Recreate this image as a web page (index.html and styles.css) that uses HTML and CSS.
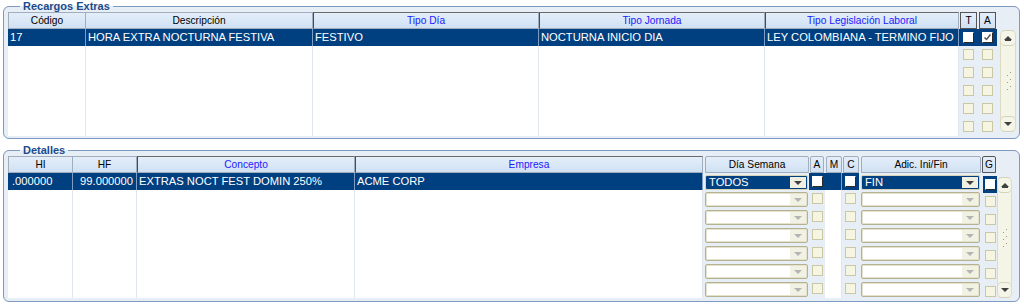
FILE: index.html
```html
<!DOCTYPE html>
<html lang="es">

<head>
  <meta charset="UTF-8">
  <meta name="viewport" content="width=device-width, initial-scale=1.0">
  <title>Recargos Extras</title>
  <link rel="stylesheet" href="styles.css">
</head>

<body>
  <fieldset class="panel panel-top">
    <legend>Recargos Extras</legend>
    <div class="grid grid-top">
      <div class="col w-cod">
        <div class="hd first">Código</div>
        <div class="sel">17</div>
        <div class="body"></div>
      </div>
      <div class="col w-desc">
        <div class="hd">Descripción</div>
        <div class="sel">HORA EXTRA NOCTURNA FESTIVA</div>
        <div class="body"></div>
      </div>
      <div class="col w-dia">
        <div class="hd lookup">Tipo Día</div>
        <div class="sel">FESTIVO</div>
        <div class="body"></div>
      </div>
      <div class="col w-jor">
        <div class="hd lookup">Tipo Jornada</div>
        <div class="sel">NOCTURNA INICIO DIA</div>
        <div class="body"></div>
      </div>
      <div class="col w-leg">
        <div class="hd lookup">Tipo Legislación Laboral</div>
        <div class="sel">LEY COLOMBIANA - TERMINO FIJO</div>
        <div class="body"></div>
      </div>
      <div class="col ck w-t">
        <div class="hd box">T</div>
        <div class="sel mid"><span class="cb on"></span></div>
        <div class="ckrow"><span class="cb"></span></div>
        <div class="ckrow"><span class="cb"></span></div>
        <div class="ckrow"><span class="cb"></span></div>
        <div class="ckrow"><span class="cb"></span></div>
        <div class="ckrow"><span class="cb"></span></div>
      </div>
      <div class="col ck w-a">
        <div class="hd box">A</div>
        <div class="sel mid">
          <span class="cb on">
            <svg width="9" height="9" viewBox="0 0 9 9"><polyline points="1.5,4.5 3.5,6.5 7.5,1.5" fill="none" stroke="#555555" stroke-width="1.5"/></svg>
          </span>
        </div>
        <div class="ckrow"><span class="cb"></span></div>
        <div class="ckrow"><span class="cb"></span></div>
        <div class="ckrow"><span class="cb"></span></div>
        <div class="ckrow"><span class="cb"></span></div>
        <div class="ckrow"><span class="cb"></span></div>
      </div>
      <div class="scroll scroll-top">
        <div class="sb-btn"><span class="tri-up"></span></div>
        <svg class="grip" width="7" height="18" viewBox="0 0 7 18">
          <rect x="5" y="0" width="1" height="1" fill="#9c9c84"/><rect x="2" y="3" width="1" height="1" fill="#9c9c84"/>
          <rect x="5" y="7" width="1" height="1" fill="#9c9c84"/><rect x="2" y="10" width="1" height="1" fill="#9c9c84"/>
          <rect x="5" y="14" width="1" height="1" fill="#9c9c84"/><rect x="2" y="17" width="1" height="1" fill="#9c9c84"/>
        </svg>
        <div class="sb-btn"><span class="tri-down"></span></div>
      </div>
    </div>
  </fieldset>

  <fieldset class="panel panel-bottom">
    <legend>Detalles</legend>
    <div class="grid grid-bottom">
      <div class="col w-hi">
        <div class="hd first">HI</div>
        <div class="sel pad">.000000</div>
        <div class="body"></div>
      </div>
      <div class="col w-hf">
        <div class="hd">HF</div>
        <div class="sel num">99.000000</div>
        <div class="body"></div>
      </div>
      <div class="col w-con">
        <div class="hd lookup">Concepto</div>
        <div class="sel">EXTRAS NOCT FEST DOMIN 250%</div>
        <div class="body"></div>
      </div>
      <div class="col w-emp">
        <div class="hd lookup">Empresa</div>
        <div class="sel">ACME CORP</div>
        <div class="body"></div>
      </div>
      <div class="col w-dsem">
        <div class="hd gap">Día Semana</div>
        <div class="sel cbrow"><div class="combo on"><span class="txt">TODOS</span><span class="arr"><span class="tri-down"></span></span></div></div>
        <div class="cbrow"><div class="combo"><span class="txt"></span><span class="arr"><span class="tri-down off"></span></span></div></div>
        <div class="cbrow"><div class="combo"><span class="txt"></span><span class="arr"><span class="tri-down off"></span></span></div></div>
        <div class="cbrow"><div class="combo"><span class="txt"></span><span class="arr"><span class="tri-down off"></span></span></div></div>
        <div class="cbrow"><div class="combo"><span class="txt"></span><span class="arr"><span class="tri-down off"></span></span></div></div>
        <div class="cbrow"><div class="combo"><span class="txt"></span><span class="arr"><span class="tri-down off"></span></span></div></div>
        <div class="cbrow"><div class="combo"><span class="txt"></span><span class="arr"><span class="tri-down off"></span></span></div></div>
      </div>
      <div class="col ck w-sm">
        <div class="hd gap">A</div>
        <div class="sel mid"><span class="cb on"></span></div>
        <div class="ckrow"><span class="cb"></span></div>
        <div class="ckrow"><span class="cb"></span></div>
        <div class="ckrow"><span class="cb"></span></div>
        <div class="ckrow"><span class="cb"></span></div>
        <div class="ckrow"><span class="cb"></span></div>
        <div class="ckrow"><span class="cb"></span></div>
      </div>
      <div class="col w-m">
        <div class="hd gap">M</div>
        <div class="sel"></div>
        <div class="body"></div>
      </div>
      <div class="col ck w-m">
        <div class="hd gap">C</div>
        <div class="sel mid"><span class="cb on"></span></div>
        <div class="ckrow"><span class="cb"></span></div>
        <div class="ckrow"><span class="cb"></span></div>
        <div class="ckrow"><span class="cb"></span></div>
        <div class="ckrow"><span class="cb"></span></div>
        <div class="ckrow"><span class="cb"></span></div>
        <div class="ckrow"><span class="cb"></span></div>
      </div>
      <div class="col w-adic">
        <div class="hd gap">Adic. Ini/Fin</div>
        <div class="sel cbrow"><div class="combo on"><span class="txt">FIN</span><span class="arr"><span class="tri-down"></span></span></div></div>
        <div class="cbrow"><div class="combo"><span class="txt"></span><span class="arr"><span class="tri-down off"></span></span></div></div>
        <div class="cbrow"><div class="combo"><span class="txt"></span><span class="arr"><span class="tri-down off"></span></span></div></div>
        <div class="cbrow"><div class="combo"><span class="txt"></span><span class="arr"><span class="tri-down off"></span></span></div></div>
        <div class="cbrow"><div class="combo"><span class="txt"></span><span class="arr"><span class="tri-down off"></span></span></div></div>
        <div class="cbrow"><div class="combo"><span class="txt"></span><span class="arr"><span class="tri-down off"></span></span></div></div>
        <div class="cbrow"><div class="combo"><span class="txt"></span><span class="arr"><span class="tri-down off"></span></span></div></div>
      </div>
      <div class="col ck w-sm col-g">
        <div class="hd gap box">G</div>
        <div class="sel mid g-sel"><span class="cb on"></span></div>
        <div class="ckrow g-row"><span class="cb"></span></div>
        <div class="ckrow g-row"><span class="cb"></span></div>
        <div class="ckrow g-row"><span class="cb"></span></div>
        <div class="ckrow g-row"><span class="cb"></span></div>
        <div class="ckrow g-row"><span class="cb"></span></div>
        <div class="ckrow g-row g-last"><span class="cb"></span></div>
      </div>
      <div class="scroll scroll-bottom">
        <div class="sb-btn"><span class="tri-up"></span></div>
        <svg class="grip" width="7" height="18" viewBox="0 0 7 18">
          <rect x="5" y="0" width="1" height="1" fill="#9c9c84"/><rect x="2" y="3" width="1" height="1" fill="#9c9c84"/>
          <rect x="5" y="7" width="1" height="1" fill="#9c9c84"/><rect x="2" y="10" width="1" height="1" fill="#9c9c84"/>
          <rect x="5" y="14" width="1" height="1" fill="#9c9c84"/><rect x="2" y="17" width="1" height="1" fill="#9c9c84"/>
        </svg>
        <div class="sb-btn"><span class="tri-down"></span></div>
      </div>
    </div>
  </fieldset>
</body>

</html>
```

FILE: styles.css
```css
body {
  margin: 0;
  background-color: #ffffff;
  font-family: "Liberation Sans", Arial, sans-serif;
  font-size: 11.2px;
  color: #000000;
}

/* group boxes */
.panel {
  margin: 0 4px 0 3px;
  padding: 0 4px 2px 4px;
  border: 1px solid #7d9bc1;
  border-radius: 6px;
  background-color: #e8eef6;
  min-width: 0;
}

.panel legend {
  margin-left: 12px;
  padding: 0 3px;
  font-size: 11px;
  font-weight: bold;
  line-height: 12px;
  color: #1b4a8a;
}

.panel-bottom {
  margin-top: 5px;
  padding-bottom: 3px;
}

/* grid */
.grid {
  display: flex;
  align-items: flex-start;
}

.grid-bottom {
  height: 142px;
}

.col {
  display: flex;
  flex-direction: column;
  flex-shrink: 0;
}

.hd {
  height: 17px;
  box-sizing: border-box;
  border: 1px solid #9fadbd;
  border-left-width: 0;
  background: linear-gradient(#e4eefa, #d0e1f3);
  text-align: center;
  font-size: 10.2px;
  line-height: 15px;
  white-space: nowrap;
  overflow: hidden;
}

.hd.first {
  border-left-width: 1px;
}

.hd.lookup {
  color: #1a1aff;
  border-left: 1px solid #4a4a4a;
  border-top-color: #6a6a6a;
}

.hd.gap {
  margin-left: 2px;
  border-left-width: 1px;
  border-radius: 2px 2px 0 0;
}

.ck .hd {
  margin: 0 1px;
  border-left-width: 1px;
}

.hd.box {
  border-color: #555555;
}

.sel {
  height: 17px;
  box-sizing: border-box;
  padding-left: 2px;
  background-color: #003f80;
  border-right: 1px solid #7f9cc4;
  color: #ffffff;
  line-height: 17px;
  white-space: nowrap;
  overflow: hidden;
}

.sel.pad {
  padding-left: 4px;
}

.sel.num {
  padding-right: 3px;
  text-align: right;
}

.sel.mid {
  display: flex;
  align-items: center;
  justify-content: center;
  padding: 0;
  border-right: 0;
}

.body {
  background-color: #ffffff;
  border-right: 1px solid #e1e6ee;
}

.grid-top .body {
  height: 90px;
}

.grid-bottom .body {
  height: 108px;
}

/* column widths */
.w-cod { width: 78px; }
.w-desc { width: 227px; }
.w-dia { width: 226px; }
.w-jor { width: 226px; }
.w-leg { width: 194px; }
.w-t { width: 19px; }
.w-a { width: 19px; }

.w-hi { width: 65px; }
.w-hf { width: 64px; }
.w-con { width: 218px; }
.w-emp { width: 348px; }
.w-dsem { width: 106px; }
.w-sm { width: 16px; }
.w-m { width: 17px; }
.w-adic { width: 122px; }

.w-m .hd {
  margin: 0 0 0 1px;
}

/* checkboxes */
.ckrow {
  height: 18px;
  box-sizing: border-box;
  padding-top: 3px;
  display: flex;
  justify-content: center;
}

.cb {
  display: flex;
  align-items: center;
  justify-content: center;
  width: 11px;
  height: 11px;
  box-sizing: border-box;
  border: 1px solid #c9c7a4;
  background-color: #f6f5e2;
}

.cb.on {
  background-color: #ffffff;
  border-color: #ffffff #2a2a2a #2a2a2a #ffffff;
}

.col-g .g-sel {
  margin-top: 3px;
  margin-left: 2px;
  background-color: #003f80;
}

.g-row {
  padding-left: 2px;
}

.g-last {
  height: 15px;
}

/* combos */
.cbrow {
  height: 18px;
  box-sizing: border-box;
  padding: 2px 1px 0 2px;
}

.sel.cbrow {
  height: 17px;
  padding: 2px 1px 0 2px;
  background-color: transparent;
  border-right: 0;
}

.combo {
  display: flex;
  height: 15px;
  box-sizing: border-box;
  border: 1px solid #b4b292;
  border-radius: 2px;
  background-color: #ffffff;
  box-shadow: inset 0 0 0 1px #e4e2ca;
}

.combo .txt {
  flex: 1;
  padding-left: 3px;
  line-height: 13px;
  overflow: hidden;
}

.combo .arr {
  width: 16px;
  margin: 1px;
  background-color: #f2f2e4;
  display: flex;
  align-items: center;
  justify-content: center;
}

.combo.on {
  background-color: #003f80;
  border-color: #d8d4b4;
  box-shadow: none;
  color: #ffffff;
}

.combo.on .arr {
  background-color: #efefe2;
}

/* scrollbars */
.scroll {
  display: flex;
  flex-direction: column;
  justify-content: space-between;
  align-items: center;
  flex-shrink: 0;
  box-sizing: border-box;
  border: 1px solid #dcdcc4;
  border-radius: 5px;
  background-color: #f5f5e7;
}

.scroll-top {
  width: 16px;
  height: 102px;
  margin: 18px 0 0 3px;
}

.scroll-bottom {
  width: 15px;
  height: 121px;
  margin: 21px 0 0 0;
}

.sb-btn {
  width: 100%;
  height: 14px;
  box-sizing: border-box;
  display: flex;
  align-items: center;
  justify-content: center;
  border-radius: 4px;
  background-color: #f5f5e7;
  box-shadow: 0 1px 0 #d4d4bc, 0 -1px 0 #d4d4bc;
}

.tri-up {
  width: 0;
  height: 0;
  border-left: 4px solid transparent;
  border-right: 4px solid transparent;
  border-bottom: 4px solid #404040;
  box-shadow: 0 2px 0 -1px #404040;
}

.tri-down {
  width: 0;
  height: 0;
  border-left: 4px solid transparent;
  border-right: 4px solid transparent;
  border-top: 4px solid #404040;
}

.tri-down.off {
  border-top-color: #b4b4b4;
}
```
